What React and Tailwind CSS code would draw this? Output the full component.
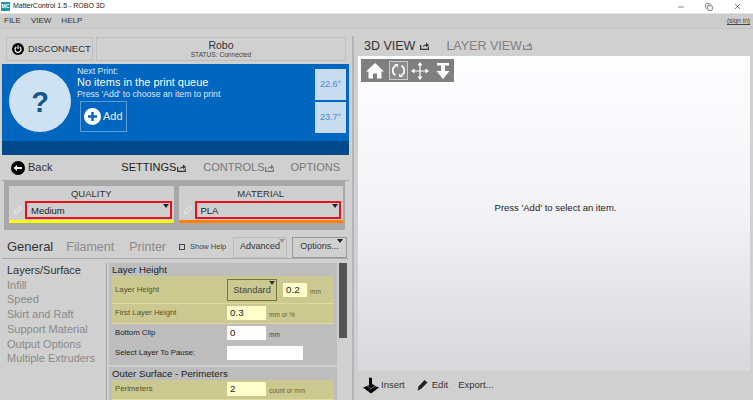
import React from 'react';
import { Minus, X, Copy } from 'lucide-react';

const font = { fontFamily: '"Liberation Sans", Arial, sans-serif' };

const PopOut = ({ className = '' }) => (
  <svg width="9" height="8" viewBox="0 0 9 8" className={className}>
    <path d="M0.6 3V7.4H8.4V4.5" fill="none" stroke="currentColor" strokeWidth="1.2" />
    <path d="M2.5 5.6C2.8 3.6 4.2 2.6 6 2.5V0.6L9 2.9L6 5.2V3.8C4.6 3.8 3.4 4.4 2.5 5.6Z" fill="currentColor" />
  </svg>
);

const Caret = ({ className = '' }) => (
  <span className={`absolute w-0 h-0 border-x-[3px] border-x-transparent border-t-[4px] ${className}`} />
);

const Pencil = () => (
  <svg width="10" height="10" viewBox="0 0 10 10" className="text-[#e8e8e8] shrink-0">
    <path d="M1 9L2 6L7 1L9 3L4 8Z" fill="none" stroke="currentColor" strokeWidth="1" />
  </svg>
);

const Preset = ({ title, value, bar }) => (
  <div className={`flex-1 bg-[#cfcfcf] h-[37px] border-b-[3px] ${bar} flex flex-col`}>
    <div className="text-[9.5px] leading-[12px] text-center text-[#333] pt-[2px] h-[15px]">{title}</div>
    <div className="flex items-center pl-[4px] pr-[2px] gap-[2px]">
      <Pencil />
      <div className="relative flex-1 h-[18px] border-2 border-[#e8101f] text-[9.5px] leading-[15px] pl-[4px] text-[#222]">
        {value}
        <Caret className="right-[1px] top-[1px] border-t-[#222]" />
      </div>
    </div>
  </div>
);

const SettingRow = ({ label, changed, tall, inputW = 'w-[39px]', value, unit, children }) => (
  <div className={`flex items-center ${tall ? 'h-[28px]' : 'h-[19.5px]'} pl-[3px] ${changed ? 'bg-[#cbc98f] border-b border-[#dcdb9c]' : ''}`}>
    <span className={`w-[112px] text-[7.8px] ${changed ? 'text-[#55532b]' : 'text-[#222]'}`}>{label}</span>
    {children}
    {!children && (
      <>
        <div className={`${inputW} h-[14px] text-[9.8px] leading-[13px] pl-[3px] text-[#222] ${changed ? 'bg-[#ffffcc]' : 'bg-white'}`}>{value}</div>
        {unit && <span className={`ml-[3px] mt-[4px] text-[6.5px] ${changed ? 'text-[#66643a]' : 'text-[#444]'}`}>{unit}</span>}
      </>
    )}
  </div>
);

const App = () => {
  return (
    <div style={font} className="relative w-[753px] h-[400px] overflow-hidden bg-[#d0d0d0] flex flex-col select-none">
      {/* window title bar */}
      <div className="h-[14px] shrink-0 bg-white flex items-center pl-[1px] border-b border-[#e4e4e4]">
        <div className="w-[9px] h-[9px] bg-[#1a9aa8] text-white text-[5px] font-bold leading-[9px] text-center">MC</div>
        <span className="ml-[3px] text-[7px] text-[#222]">MatterControl 1.5 - ROBO 3D</span>
        <div className="ml-auto flex items-center text-[#444] gap-[20px] pr-[11px]">
          <Minus size={8} strokeWidth={2} />
          <Copy size={8} strokeWidth={2} />
          <X size={9} strokeWidth={1.8} />
        </div>
      </div>

      {/* menu */}
      <div className="h-[15px] shrink-0 flex items-center bg-[#cccccc] border-b border-[#c4c4c4] pl-[4px] pr-[3px] gap-[10px] text-[8px] text-[#333]">
        <span>FILE</span>
        <span>VIEW</span>
        <span>HELP</span>
        <span className="ml-auto text-[6.5px] underline text-[#444]">(sign in)</span>
      </div>

      <div className="flex-1 flex min-h-0">
        {/* left column */}
        <div className="w-[352px] shrink-0 flex flex-col pl-[2px] pt-[8px] min-h-0">
          <div className="flex h-[24px] shrink-0 gap-[3px] pl-[4px] pr-[6px]">
            <div className="w-[87px] border border-[#bfbfbf] flex items-center pl-[5px] gap-[4px]">
              <span className="w-[12px] h-[12px] rounded-full bg-black flex items-center justify-center">
                <svg width="8" height="8" viewBox="0 0 8 8">
                  <path d="M2.3 2A3 3 0 1 0 5.7 2M4 0.5V4" fill="none" stroke="white" strokeWidth="1.2" />
                </svg>
              </span>
              <span className="text-[9.5px] text-[#333]">DISCONNECT</span>
            </div>
            <div className="flex-1 border border-[#bfbfbf] flex flex-col items-center justify-center">
              <span className="text-[10.5px] leading-[11px] text-[#333]">Robo</span>
              <span className="text-[6.6px] leading-[7px] text-[#444]">STATUS: Connected</span>
            </div>
          </div>

          {/* next print */}
          <div className="mt-[3px] h-[91px] shrink-0 w-[347px] bg-[#0066bf] flex flex-col">
            <div className="flex-1 flex">
              <div className="w-[62px] h-[62px] rounded-full bg-[#cfe2f3] mt-[6px] ml-[7px] pt-[3px] shrink-0 flex items-center justify-center text-[#14588f] text-[29px] font-bold">?</div>
              <div className="ml-[6px] pt-[3px] text-white flex-1">
                <div className="text-[8.8px] leading-[9px] text-[#dce9f5]">Next Print:</div>
                <div className="text-[11px] leading-[12px]">No items in the print queue</div>
                <div className="text-[8.7px] leading-[12px] text-[#dce9f5]">Press 'Add' to choose an item to print</div>
                <div className="ml-[3px] mt-[1px] w-[47px] h-[31px] border border-[#5f9ad3] flex items-center pl-[3px] gap-[2px]">
                  <span className="w-[17px] h-[17px] rounded-full bg-white flex items-center justify-center">
                    <svg width="11" height="11" viewBox="0 0 11 11"><path d="M5.5 1V10M1 5.5H10" stroke="#0066bf" strokeWidth="2.4" /></svg>
                  </span>
                  <span className="text-[11px] text-[#e6f0f9]">Add</span>
                </div>
              </div>
              <div className="w-[31px] mr-[3px] pt-[5px] flex flex-col gap-[2px]">
                <div className="h-[31px] bg-[#c8dcf0] text-[#4a8acb] text-[9px] flex items-center justify-center">22.6°</div>
                <div className="h-[31px] bg-[#c8dcf0] text-[#4a8acb] text-[9px] flex items-center justify-center">23.7°</div>
              </div>
            </div>
            <div className="h-[14px] bg-[#004a8c]" />
          </div>

          {/* tabs */}
          <div className="h-[26px] shrink-0 flex items-center pl-[9px] pr-[9px] border-b border-[#a9a9a9] w-[347px]">
            <span className="w-[14px] h-[14px] rounded-full bg-black flex items-center justify-center">
              <svg width="10" height="8" viewBox="0 0 10 8"><path d="M0.5 4L4 1V3H9V5H4V7Z" fill="white" /></svg>
            </span>
            <span className="ml-[3px] text-[11px] text-[#333]">Back</span>
            <span className="ml-auto text-[11px] text-[#222]">SETTINGS</span>
            <PopOut className="ml-[1px] text-[#333]" />
            <span className="ml-[17px] text-[11px] text-[#777]">CONTROLS</span>
            <PopOut className="ml-[1px] text-[#777]" />
            <span className="ml-[16px] text-[11px] text-[#777]">OPTIONS</span>
          </div>

          {/* presets */}
          <div className="h-[49px] shrink-0 w-[341px] ml-[2px] bg-[#a8a8a8] flex gap-[5px] pl-[5px] pr-[2px] pt-[5px]">
            <Preset title="QUALITY" value="Medium" bar="border-[#ffff00]" />
            <Preset title="MATERIAL" value="PLA" bar="border-[#ff8000]" />
          </div>

          {/* settings tabs */}
          <div className="h-[29px] shrink-0 w-[346px] flex items-center pl-[5px] pr-[1px] pt-[6px] border-b border-[#a9a9a9] whitespace-nowrap">
            <span className="text-[13px] text-[#333]">General</span>
            <span className="ml-[13px] text-[12.5px] text-[#8a8a8a]">Filament</span>
            <span className="ml-[15px] text-[12.5px] text-[#8a8a8a]">Printer</span>
            <span className="ml-[13px] w-[6px] h-[6px] border border-[#444] shrink-0" />
            <span className="ml-[5px] text-[7.5px] text-[#444]">Show Help</span>
            <div className="relative ml-auto w-[54px] h-[21px] border border-[#bdbdbd] text-[9px] text-[#333] flex items-center justify-center">
              Advanced
              <Caret className="right-[1px] top-[1px] border-t-[#999]" />
            </div>
            <div className="relative ml-[5px] w-[55px] h-[21px] border border-[#999] text-[9px] text-[#333] flex items-center justify-center">
              Options...
              <Caret className="right-[3px] top-[1px] border-t-[#222]" />
            </div>
          </div>

          {/* settings body */}
          <div className="flex-1 flex min-h-0 pt-[4px]">
            <div className="w-[105px] shrink-0 pl-[5px] border-r border-[#a9a9a9] text-[11px] leading-[14.7px] text-[#8a8a8a]">
              <div className="text-[#333]">Layers/Surface</div>
              <div>Infill</div>
              <div>Speed</div>
              <div>Skirt and Raft</div>
              <div>Support Material</div>
              <div>Output Options</div>
              <div>Multiple Extruders</div>
            </div>
            <div className="w-[228px] ml-[2px] shrink-0 overflow-hidden">
              <div className="bg-[#bdbdbd] px-[3px] h-[102px]">
                <div className="text-[9.7px] leading-[13px] text-[#222]">Layer Height</div>
                <SettingRow label="Layer Height" changed tall>
                  <div className="relative w-[50px] h-[22px] border border-[#77753f] text-[9.3px] leading-[20px] text-center text-[#444]">
                    Standard
                    <Caret className="right-[1px] top-[1px] border-t-[#333]" />
                  </div>
                  <div className="ml-[6px] w-[24px] h-[14px] bg-[#ffffcc] text-[9.8px] leading-[13px] pl-[3px] text-[#222]">0.2</div>
                  <span className="ml-[3px] mt-[4px] text-[6.5px] text-[#66643a]">mm</span>
                </SettingRow>
                <SettingRow label="First Layer Height" changed value="0.3" unit="mm or %" />
                <SettingRow label="Bottom Clip" value="0" unit="mm" />
                <SettingRow label="Select Layer To Pause:" inputW="w-[76px]" />
              </div>
              <div className="bg-[#bdbdbd] px-[3px] mt-[2px] h-[40px]">
                <div className="text-[9.7px] leading-[13px] text-[#222]">Outer Surface - Perimeters</div>
                <SettingRow label="Perimeters" changed value="2" unit="count or mm" />
              </div>
            </div>
            <div className="w-[8px] ml-[2px] shrink-0">
              <div className="h-[75px] bg-[#555]" />
            </div>
          </div>
        </div>

        {/* divider */}
        <div className="w-[2px] shrink-0 bg-[#b5b5b5] mt-[7px]" />

        {/* right column */}
        <div className="flex-1 flex flex-col pt-[7px] pl-[4px] pr-[3px] min-w-0">
          <div className="h-[20px] shrink-0 flex items-center pl-[6px] text-[12.5px]">
            <span className="text-[#333]">3D VIEW</span>
            <PopOut className="ml-[5px] text-[#333]" />
            <span className="ml-[17px] text-[#808080]">LAYER VIEW</span>
            <PopOut className="ml-[1px] text-[#808080]" />
          </div>
          <div className="h-[315px] shrink-0 pb-[10px] bg-linear-to-b from-[#fefdff] via-[#f3f2f6] to-[#d8d7dc] relative flex items-center justify-center">
            <span className="text-[9.5px] text-[#222] mr-[-3px]">Press 'Add' to select an item.</span>
            <div className="absolute left-[3px] top-[3px] w-[93px] h-[23px] bg-[#7f7f7f] flex items-center text-white">
              <svg width="26" height="18" viewBox="0 0 26 18" className="ml-[1px]">
                <path d="M13 1L22 9.5H19.5V16.5H15V11.5H11V16.5H6.5V9.5H4Z" fill="white" />
              </svg>
              <div className="w-[19px] h-[19px] ml-[1px] border border-[#c9c9c9] bg-[#8c8c8c] flex items-center justify-center">
                <svg width="15" height="15" viewBox="0 0 15 15">
                  <path d="M4.5 2.7A5.5 5.5 0 0 0 4.5 12.3M10.5 2.7A5.5 5.5 0 0 1 10.5 12.3" fill="none" stroke="white" strokeWidth="1.6" />
                  <path d="M3 1H7V4.5ZM12 14H8V10.5Z" fill="white" />
                </svg>
              </div>
              <svg width="18" height="18" viewBox="0 0 18 18" className="ml-[3px]">
                <path d="M9 1V17M1 9H17" stroke="white" strokeWidth="1.2" />
                <path d="M9 0L11.5 3.5H6.5ZM9 18L6.5 14.5H11.5ZM0 9L3.5 6.5V11.5ZM18 9L14.5 11.5V6.5Z" fill="white" />
              </svg>
              <svg width="18" height="18" viewBox="0 0 18 18" className="ml-[5px]">
                <path d="M3 1H15V3.5H11V9H15.5L9 17L2.5 9H7V3.5H3Z" fill="white" />
              </svg>
            </div>
          </div>
          <div className="flex-1 flex items-center pl-[3px] pb-[1px] text-[9.5px] text-[#333]">
            <svg width="18" height="17" viewBox="0 0 18 17" className="ml-[1px] shrink-0">
              <path d="M7 0.5L10 1V7L13 8.5L9 11.5L5 8.5H7Z M1 10.5L5 9L9 12L13 9L17 10.5L9 16.5Z" fill="black" />
            </svg>
            <span className="ml-[1px]">Insert</span>
            <svg width="11" height="12" viewBox="0 0 11 12" className="ml-[12px] shrink-0">
              <path d="M0.5 11.5L1.5 7.5L7.5 1L10.5 3.5L4 10Z" fill="#222" />
            </svg>
            <span className="ml-[4px]">Edit</span>
            <span className="ml-[10px]">Export...</span>
          </div>
        </div>
      </div>
    </div>
  );
};

export default App;
